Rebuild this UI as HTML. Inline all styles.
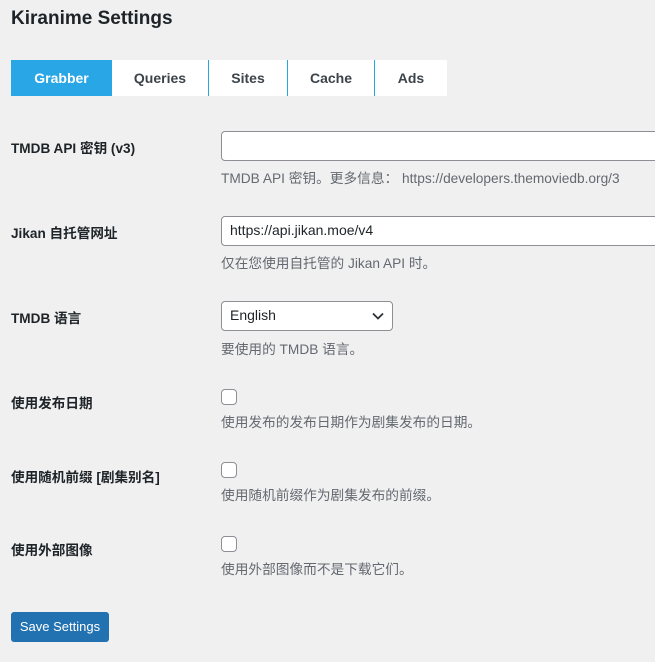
<!DOCTYPE html>
<html><head><meta charset="utf-8"><style>
body{margin:0;background:#f0f0f1;width:655px;height:662px;overflow:hidden;font-family:"Liberation Sans","Noto Sans CJK SC",sans-serif;color:#1d2327;position:relative}
.a{position:absolute}
h1{position:absolute;left:11px;top:8px;margin:0;font-size:19px;font-weight:600;color:#1d2327}
.tab{position:absolute;top:60px;height:36px;line-height:36px;text-align:center;background:#fff;font-size:14px;font-weight:600;color:#3c434a}
.lbl{position:absolute;left:11px;font-size:13.6px;font-weight:700;color:#1d2327}
.desc{position:absolute;left:221px;font-size:13.7px;color:#646970;white-space:nowrap}
.inp{position:absolute;left:221px;width:440px;height:28px;border:1px solid #8c8f94;border-radius:4px;background:#fff;box-sizing:border-box;font-size:14px;line-height:26px;padding-left:8px}
.cb{position:absolute;left:221px;width:16px;height:16px;border:1px solid #8c8f94;border-radius:4px;background:#fff;box-sizing:border-box}
</style></head><body>
<h1>Kiranime Settings</h1>
<div class="tab" style="left:11px;width:101px;background:#29a6e6;color:#fff">Grabber</div>
<div class="tab" style="left:112px;width:96px">Queries</div>
<div class="a" style="left:208px;top:60px;width:1px;height:36px;background:#29a6e6"></div>
<div class="tab" style="left:209px;width:78px">Sites</div>
<div class="a" style="left:287px;top:60px;width:1px;height:36px;background:#29a6e6"></div>
<div class="tab" style="left:288px;width:86px">Cache</div>
<div class="a" style="left:374px;top:60px;width:1px;height:36px;background:#29a6e6"></div>
<div class="tab" style="left:375px;width:72px">Ads</div>

<div class="lbl" style="top:137px">TMDB API 密钥 (v3)</div>
<div class="inp" style="top:131px;height:30px"></div>
<div class="desc" style="top:167px">TMDB API 密钥。更多信息： https://developers.themoviedb.org/3</div>

<div class="lbl" style="top:222px">Jikan 自托管网址</div>
<div class="inp" style="top:216px;height:30px">https://api.jikan.moe/v4</div>
<div class="desc" style="top:252px">仅在您使用自托管的 Jikan API 时。</div>

<div class="lbl" style="top:307px">TMDB 语言</div>
<div class="inp" style="top:301px;width:172px;height:30px">English
<svg class="a" style="right:8px;top:10px" width="12" height="8" viewBox="0 0 12 8"><path d="M1 1.5l5 5 5-5" fill="none" stroke="#2c3338" stroke-width="1.8"/></svg></div>
<div class="desc" style="top:338px">要使用的 TMDB 语言。</div>

<div class="lbl" style="top:392px">使用发布日期</div>
<div class="cb" style="top:389px"></div>
<div class="desc" style="top:411px">使用发布的发布日期作为剧集发布的日期。</div>

<div class="lbl" style="top:466px">使用随机前缀 [剧集别名]</div>
<div class="cb" style="top:462px"></div>
<div class="desc" style="top:484px">使用随机前缀作为剧集发布的前缀。</div>

<div class="lbl" style="top:539px">使用外部图像</div>
<div class="cb" style="top:536px"></div>
<div class="desc" style="top:558px">使用外部图像而不是下载它们。</div>

<div class="a" style="left:11px;top:612px;width:98px;height:30px;background:#2271b1;border-radius:3px;color:#fff;font-size:13px;line-height:30px;text-align:center">Save Settings</div>
</body></html>
